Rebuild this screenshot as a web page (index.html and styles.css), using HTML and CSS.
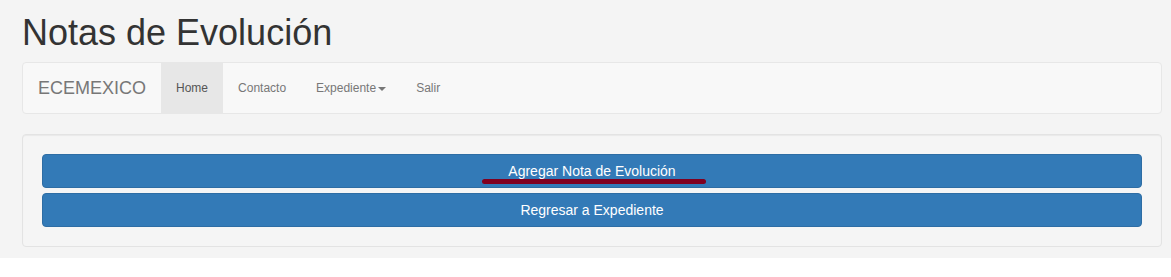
FILE: index.html
```html
<!DOCTYPE html>
<html lang="es">
<head>
<meta charset="utf-8">
<title>Notas de Evolución</title>
<link rel="stylesheet" href="styles.css">
</head>
<body>
<div class="page">
  <h1 class="title">Notas de Evolución</h1>
  <nav class="navbar">
    <a class="brand" href="#">ECEMEXICO</a>
    <ul class="nav">
      <li class="active"><a href="#">Home</a></li>
      <li><a href="#">Contacto</a></li>
      <li><a href="#">Expediente<span class="caret"></span></a></li>
      <li><a href="#">Salir</a></li>
    </ul>
  </nav>
  <div class="well">
    <button class="btn">Agregar Nota de Evolución<span class="mark"></span></button>
    <button class="btn btn-second">Regresar a Expediente</button>
  </div>
</div>
</body>
</html>
```

FILE: styles.css
```css
html, body {
  margin: 0;
  padding: 0;
  background: #ffffff;
}

body {
  font-family: "Liberation Sans", Arial, Helvetica, sans-serif;
  font-size: 14px;
  line-height: 20px;
  color: #333333;
}

.page {
  background: #f4f4f4;
  padding: 13px 9px 11px 22px;
}

.title {
  margin: 0 0 9px 0;
  font-size: 36px;
  line-height: 40px;
  font-weight: normal;
  color: #333333;
}

.navbar {
  display: flex;
  align-items: stretch;
  height: 50px;
  background: #f8f8f8;
  border: 1px solid #e7e7e7;
  border-radius: 4px;
  margin-bottom: 20px;
}

.brand {
  display: block;
  padding: 15px;
  font-size: 18px;
  line-height: 20px;
  color: #777777;
  text-decoration: none;
}

.nav {
  display: flex;
  list-style: none;
  margin: 0;
  padding: 0;
}

.nav li a {
  display: block;
  padding: 15px;
  font-size: 12px;
  line-height: 20px;
  color: #777777;
  text-decoration: none;
}

.nav li.active a {
  background: #e7e7e7;
  color: #555555;
}

.caret {
  display: inline-block;
  width: 0;
  height: 0;
  margin-left: 2px;
  vertical-align: middle;
  border-top: 4px solid #777777;
  border-left: 4px solid transparent;
  border-right: 4px solid transparent;
}

.well {
  background: #f5f5f5;
  border: 1px solid #e3e3e3;
  border-radius: 4px;
  padding: 19px;
  box-shadow: inset 0 1px 1px rgba(0, 0, 0, 0.05);
}

.btn {
  position: relative;
  display: block;
  width: 100%;
  height: 34px;
  padding: 6px 12px;
  font-family: "Liberation Sans", Arial, Helvetica, sans-serif;
  font-size: 14px;
  line-height: 20px;
  color: #ffffff;
  background: #337ab7;
  border: 1px solid #2e6da4;
  border-radius: 4px;
  text-align: center;
  cursor: pointer;
}

.btn-second {
  margin-top: 5px;
}

.mark {
  position: absolute;
  left: 50%;
  margin-left: -110px;
  top: 24px;
  width: 224px;
  height: 5px;
  border-radius: 3px;
  background: #800020;
}
```
